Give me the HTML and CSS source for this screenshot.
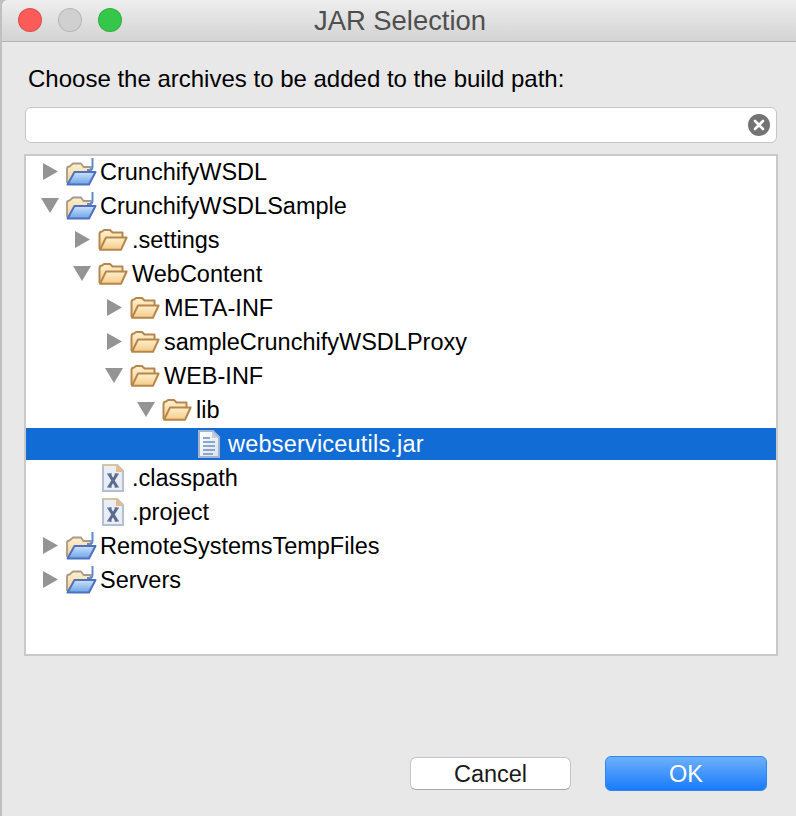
FILE: index.html
```html
<!DOCTYPE html>
<html lang="en">
<head>
<meta charset="utf-8">
<title>JAR Selection</title>
<link rel="stylesheet" href="styles.css">
</head>
<body>
<svg class="defs" width="0" height="0" aria-hidden="true">
  <defs>
    <linearGradient id="tan" x1="0" y1="0" x2="0" y2="1"><stop offset="0" stop-color="#fdf0cf"/><stop offset="1" stop-color="#f7cf8e"/></linearGradient>
    <linearGradient id="tanfront" x1="0" y1="0" x2="0" y2="1"><stop offset="0" stop-color="#fff1cf"/><stop offset="1" stop-color="#f5c987"/></linearGradient>
    <linearGradient id="blue" x1="0" y1="0" x2="0" y2="1"><stop offset="0" stop-color="#cfe3fa"/><stop offset="1" stop-color="#6aa4e8"/></linearGradient>
    <linearGradient id="page" x1="0" y1="0" x2="1" y2="1"><stop offset="0" stop-color="#ffffff"/><stop offset="1" stop-color="#d8e2f0"/></linearGradient>
    <symbol id="folder" viewBox="0 0 30 22">
      <path d="M1.5 20V5Q1.5 2.5 4 2.5L6 1H12L14.5 3.5H24.5V8" fill="url(#tan)" stroke="#b5864e" stroke-width="2" stroke-linejoin="round"/>
      <path d="M8 8.5H28.6L23 20.8H2Z" fill="url(#tanfront)" stroke="#b8854a" stroke-width="2" stroke-linejoin="round"/>
    </symbol>
    <symbol id="project" viewBox="0 0 32 28">
      <path d="M2 25V11Q2 8.500 4.500 8.500L8 5.500H16L18.500 9H26V14" fill="url(#tan)" stroke="#a89a88" stroke-width="1.800" stroke-linejoin="round"/>
      <path d="M9.500 14H30.500L24 26.500H2.500Z" fill="url(#blue)" stroke="#4f6fc0" stroke-width="2" stroke-linejoin="round"/>
      <path d="M27.500 0V9Q27.500 12 24.500 12H22" fill="none" stroke="#5f8ad0" stroke-width="2"/>
    </symbol>
    <symbol id="xmlfile" viewBox="0 0 22 28">
      <path d="M1 1H15L21 7V27H1Z" fill="#e8edf6" stroke="#b3bfd3" stroke-width="2"/>
      <path d="M14 0L22 8H14Z" fill="#e4bd86"/>
      <path d="M1 1H14" stroke="#d9c4a0" stroke-width="2"/>
      <path d="M7 10L15 23M15 10L7 23" stroke="#5b6b90" stroke-width="3" fill="none"/>
      <path d="M5 10H10M12.500 10H17M5 23H10M12.500 23H17" stroke="#5b6b90" stroke-width="1.200" fill="none"/>
    </symbol>
    <symbol id="jarfile" viewBox="0 0 22 28">
      <path d="M1 1H15L21 7V27H1Z" fill="url(#page)" stroke="#a3b4cb" stroke-width="2"/>
      <path d="M14 1L21 8H14Z" fill="#c3cedd"/>
      <path d="M5 8H12M5 12H17M5 16H17M5 20H17M5 24H15" stroke="#8ba5cb" stroke-width="2"/>
    </symbol>
    <symbol id="right" viewBox="0 0 15 17"><path d="M0 0L15 8.500L0 17Z"/></symbol>
    <symbol id="down" viewBox="0 0 18 15"><path d="M0 0H18L9 15Z"/></symbol>
  </defs>
</svg>
<main class="window">
  <header class="titlebar">
    <div class="lights">
      <span class="light red"></span>
      <span class="light grey"></span>
      <span class="light green"></span>
    </div>
    <h1 class="title">JAR Selection</h1>
  </header>
  <section class="content">
    <p class="prompt">Choose the archives to be added to the build path:</p>
    <div class="search">
      <svg class="clear" viewBox="0 0 22 22" aria-hidden="true">
        <circle cx="11" cy="11" r="11" fill="#737373"/>
        <path d="M7 7L15 15M15 7L7 15" stroke="#fff" stroke-width="2.600" stroke-linecap="round"/>
      </svg>
    </div>
    <ul class="tree">
      <li class="row d0"><svg class="tw"><use href="#right" x="2" y="7" width="15" height="17"/></svg><svg class="ic project"><use href="#project"/></svg><span class="lb">CrunchifyWSDL</span></li>
      <li class="row d0"><svg class="tw"><use href="#down" x="0" y="8" width="18" height="15"/></svg><svg class="ic project"><use href="#project"/></svg><span class="lb">CrunchifyWSDLSample</span></li>
      <li class="row d1"><svg class="tw"><use href="#right" x="2" y="7" width="15" height="17"/></svg><svg class="ic folder"><use href="#folder"/></svg><span class="lb">.settings</span></li>
      <li class="row d1"><svg class="tw"><use href="#down" x="0" y="8" width="18" height="15"/></svg><svg class="ic folder"><use href="#folder"/></svg><span class="lb">WebContent</span></li>
      <li class="row d2"><svg class="tw"><use href="#right" x="2" y="7" width="15" height="17"/></svg><svg class="ic folder"><use href="#folder"/></svg><span class="lb">META-INF</span></li>
      <li class="row d2"><svg class="tw"><use href="#right" x="2" y="7" width="15" height="17"/></svg><svg class="ic folder"><use href="#folder"/></svg><span class="lb">sampleCrunchifyWSDLProxy</span></li>
      <li class="row d2"><svg class="tw"><use href="#down" x="0" y="8" width="18" height="15"/></svg><svg class="ic folder"><use href="#folder"/></svg><span class="lb">WEB-INF</span></li>
      <li class="row d3"><svg class="tw"><use href="#down" x="0" y="8" width="18" height="15"/></svg><svg class="ic folder"><use href="#folder"/></svg><span class="lb">lib</span></li>
      <li class="row d4 selected"><span class="tw"></span><svg class="ic file"><use href="#jarfile"/></svg><span class="lb">webserviceutils.jar</span></li>
      <li class="row d1"><span class="tw"></span><svg class="ic file"><use href="#xmlfile"/></svg><span class="lb">.classpath</span></li>
      <li class="row d1"><span class="tw"></span><svg class="ic file"><use href="#xmlfile"/></svg><span class="lb">.project</span></li>
      <li class="row d0"><svg class="tw"><use href="#right" x="2" y="7" width="15" height="17"/></svg><svg class="ic project"><use href="#project"/></svg><span class="lb">RemoteSystemsTempFiles</span></li>
      <li class="row d0"><svg class="tw"><use href="#right" x="2" y="7" width="15" height="17"/></svg><svg class="ic project"><use href="#project"/></svg><span class="lb">Servers</span></li>
    </ul>
    <div class="actions">
      <button class="btn cancel" type="button">Cancel</button>
      <button class="btn ok" type="button">OK</button>
    </div>
  </section>
</main>
</body>
</html>
```

FILE: styles.css
```css
* { box-sizing: border-box; }
html, body { margin: 0; padding: 0; }
body {
  width: 796px;
  height: 816px;
  overflow: hidden;
  background: #c0c0c0;
  font-family: "Liberation Sans", Arial, sans-serif;
  color: #000;
}
.defs { display: block; height: 0; }
.window {
  margin-left: 2px;
  height: 816px;
  background: #e8e8e8;
  border-top-left-radius: 6px;
  display: flex;
  flex-direction: column;
  overflow: hidden;
}
.titlebar {
  height: 42px;
  flex: none;
  display: flex;
  align-items: center;
  justify-content: center;
  padding-left: 2px;
  position: relative;
  background: linear-gradient(#eeeeee, #d3d3d3);
  border-bottom: 1px solid #b4b4b4;
}
.lights {
  position: absolute;
  left: 16px;
  top: 8px;
  display: flex;
  gap: 16px;
}
.light {
  width: 24px;
  height: 24px;
  border-radius: 50%;
  border: 1px solid rgba(0,0,0,.12);
}
.red { background: #fc5b57; }
.grey { background: #d0d0d0; }
.green { background: #35c749; }
.title {
  margin: 1px 0 0;
  font-size: 27.4px;
  font-weight: 400;
  color: #4f4f4f;
  line-height: 30px;
}
.content {
  flex: 1;
  padding: 24px 18px 0 22px;
  display: flex;
  flex-direction: column;
}
.prompt {
  margin: 0 0 15px 4px;
  font-size: 24px;
  line-height: 26px;
}
.search {
  height: 36px;
  margin: 0 1px 11px;
  background: #fff;
  border: 1px solid #c6c6c6;
  border-radius: 6px;
  display: flex;
  align-items: center;
  justify-content: flex-end;
  padding-right: 6px;
}
.clear { width: 22px; height: 22px; display: block; }
.tree {
  list-style: none;
  margin: 0;
  padding: 0;
  height: 502px;
  background: #fff;
  border: 2px solid #c9c9c9;
  display: flex;
  flex-direction: column;
  gap: 2px;
}
.row {
  height: 32px;
  flex: none;
  display: flex;
  align-items: center;
  font-size: 23.500px;
  white-space: nowrap;
}
.d0 { padding-left: 15px; }
.d1 { padding-left: 47px; }
.d2 { padding-left: 79px; }
.d3 { padding-left: 111px; }
.d4 { padding-left: 143px; }
.tw { width: 24px; height: 32px; flex: none; fill: #949494; display: block; }
.ic { flex: none; display: block; overflow: visible; }
.project { width: 32px; height: 28px; margin-top: -1px; }
.folder { width: 30px; height: 22px; margin: 0 4px 0 1px; }
.file { width: 22px; height: 28px; margin: 0 5px; }
.lb { margin-left: 3px; line-height: 32px; }
.folder + .lb { margin-left: 0; }
.selected { background: #116cd6; color: #fff; }
.selected .lb { letter-spacing: .2px; }
.actions {
  margin-top: 100px;
  display: flex;
  justify-content: flex-end;
  align-items: center;
  gap: 34px;
  padding-right: 11px;
}
.btn {
  font: 23.500px/1 "Liberation Sans", Arial, sans-serif;
  padding: 2px 0 0;
  border-radius: 6px;
}
.cancel {
  width: 161px;
  height: 33px;
  background: #fff;
  color: #1a1a1a;
  border: 1px solid #c4c4c4;
  border-bottom-color: #a8a8a8;
}
.ok {
  width: 162px;
  height: 35px;
  color: #fff;
  border: 1px solid #2f86f0;
  background: linear-gradient(#6cb0fb, #1a7bfb);
}
```
